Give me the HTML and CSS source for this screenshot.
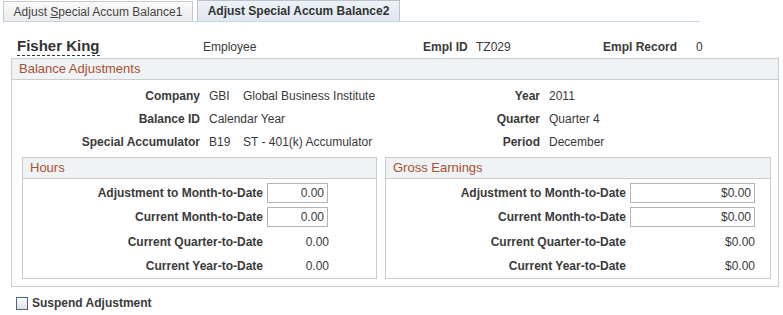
FILE: index.html
```html
<!DOCTYPE html>
<html>
<head>
<meta charset="utf-8">
<link rel="stylesheet" href="styles.css">
</head>
<body>
<div class="tabs">
  <div class="tab tab-inactive"><span>Adjust <u>S</u>pecial Accum Balance1</span></div>
  <div class="tab tab-active"><span>Adjust Special Accum Balance2</span></div>
</div>
<div class="emp-header">
  <div class="cell-name"><span class="emp-name">Fisher King</span></div>
  <div class="cell-type">Employee</div>
  <div class="lbl cell-idlbl">Empl ID</div>
  <div class="cell-id">TZ029</div>
  <div class="lbl cell-reclbl">Empl Record</div>
  <div>0</div>
</div>
<div class="group outer">
  <div class="group-head">Balance Adjustments</div>
  <div class="info-grid">
    <span class="lbl">Company</span><span class="val"><span class="code">GBI</span>Global Business Institute</span><span class="lbl">Year</span><span class="val">2011</span>
    <span class="lbl">Balance ID</span><span class="val">Calendar Year</span><span class="lbl">Quarter</span><span class="val">Quarter 4</span>
    <span class="lbl">Special Accumulator</span><span class="val"><span class="code">B19</span>ST - 401(k) Accumulator</span><span class="lbl">Period</span><span class="val">December</span>
  </div>
  <div class="subgroups">
    <div class="group sub hours">
      <div class="group-head">Hours</div>
      <div class="sub-rows">
        <div class="frow"><span class="lbl">Adjustment to Month-to-Date</span><input class="box box-h" type="text" value="0.00"></div>
        <div class="frow"><span class="lbl">Current Month-to-Date</span><input class="box box-h" type="text" value="0.00"></div>
        <div class="frow frow-gap"><span class="lbl">Current Quarter-to-Date</span><span class="disp disp-h">0.00</span></div>
        <div class="frow"><span class="lbl">Current Year-to-Date</span><span class="disp disp-h">0.00</span></div>
      </div>
    </div>
    <div class="group sub gross">
      <div class="group-head">Gross Earnings</div>
      <div class="sub-rows">
        <div class="frow"><span class="lbl">Adjustment to Month-to-Date</span><input class="box box-g" type="text" value="$0.00"></div>
        <div class="frow"><span class="lbl">Current Month-to-Date</span><input class="box box-g" type="text" value="$0.00"></div>
        <div class="frow frow-gap"><span class="lbl">Current Quarter-to-Date</span><span class="disp disp-g">$0.00</span></div>
        <div class="frow"><span class="lbl">Current Year-to-Date</span><span class="disp disp-g">$0.00</span></div>
      </div>
    </div>
  </div>
</div>
<div class="check-row"><span class="checkbox"></span><span class="lbl">Suspend Adjustment</span></div>
</body>
</html>
```
FILE: styles.css
```css
* { box-sizing: border-box; }
body {
  margin: 0;
  font-family: "Liberation Sans", Arial, sans-serif;
  font-size: 12px;
  color: #383838;
  background: #fff;
}
.lbl { font-weight: bold; color: #3a3a3a; }

.tabs {
  display: flex;
  align-items: flex-end;
  gap: 4px;
  margin-left: 3px;
  width: 697px;
  height: 22px;
  border-bottom: 1px solid #c6d5e4;
}
.tab {
  display: flex;
  align-items: center;
  justify-content: center;
  border: 1px solid;
  border-bottom: none;
}
.tab-inactive {
  width: 190px;
  height: 20px;
  background: linear-gradient(#fafafa, #ebebeb);
  border-color: #c8c8c8;
  color: #444;
}
.tab-active {
  width: 203px;
  height: 21px;
  background: linear-gradient(#eef2f7, #dfe7ef);
  border-color: #b7c3d0;
  font-weight: bold;
  color: #333;
}

.emp-header {
  display: flex;
  align-items: baseline;
  height: 36px;
  padding: 16px 0 0 17px;
}
.cell-name { width: 186px; }
.emp-name {
  font-size: 15px;
  line-height: 15px;
  padding-bottom: 2px;
  font-weight: bold;
  color: #333;
  border-bottom: 1px dashed #333;
  display: inline-block;
}
.cell-type { width: 220px; }
.cell-idlbl { width: 53px; }
.cell-id { width: 127px; }
.cell-reclbl { width: 93px; }

.group { border: 1px solid #cbcbcb; }
.outer { margin-left: 11px; width: 768px; }
.group-head {
  height: 21px;
  line-height: 20px;
  background: #f0f3f5;
  border-bottom: 1px solid #cbcbcb;
  padding-left: 7px;
  font-size: 13px;
  color: #a8502f;
}

.info-grid {
  display: grid;
  grid-template-columns: 188px 240px 82px auto;
  column-gap: 9px;
  grid-auto-rows: 23px;
  align-items: center;
  padding-top: 4px;
}
.info-grid .lbl { text-align: right; }
.code { display: inline-block; width: 34px; }

.subgroups {
  display: flex;
  gap: 8px;
  padding: 4px 7px 7px 10px;
}
.hours { width: 355px; }
.gross { width: 386px; }
.sub-rows { padding-top: 2px; }
.frow {
  display: flex;
  align-items: center;
  height: 24px;
}
.frow-gap { margin-top: 1px; }
.frow .lbl {
  width: 240px;
  margin-right: 4px;
  text-align: right;
}
.box {
  height: 20px;
  border: 1px solid #b4b4b4;
  background: #fff;
  font: inherit;
  color: #383838;
  text-align: right;
  padding: 0 3px 0 0;
  margin: 0;
  outline: none;
}
.box-h { width: 61px; }
.box-g { width: 125px; }
.disp { text-align: right; }
.disp-h { width: 62px; }
.disp-g { width: 125px; }

.check-row {
  display: flex;
  align-items: center;
  gap: 4px;
  margin: 9px 0 0 16px;
}
.checkbox {
  width: 12px;
  height: 13px;
  border: 1px solid #4c6582;
  background: linear-gradient(#fcfcfc, #e0e0e0);
}
```
